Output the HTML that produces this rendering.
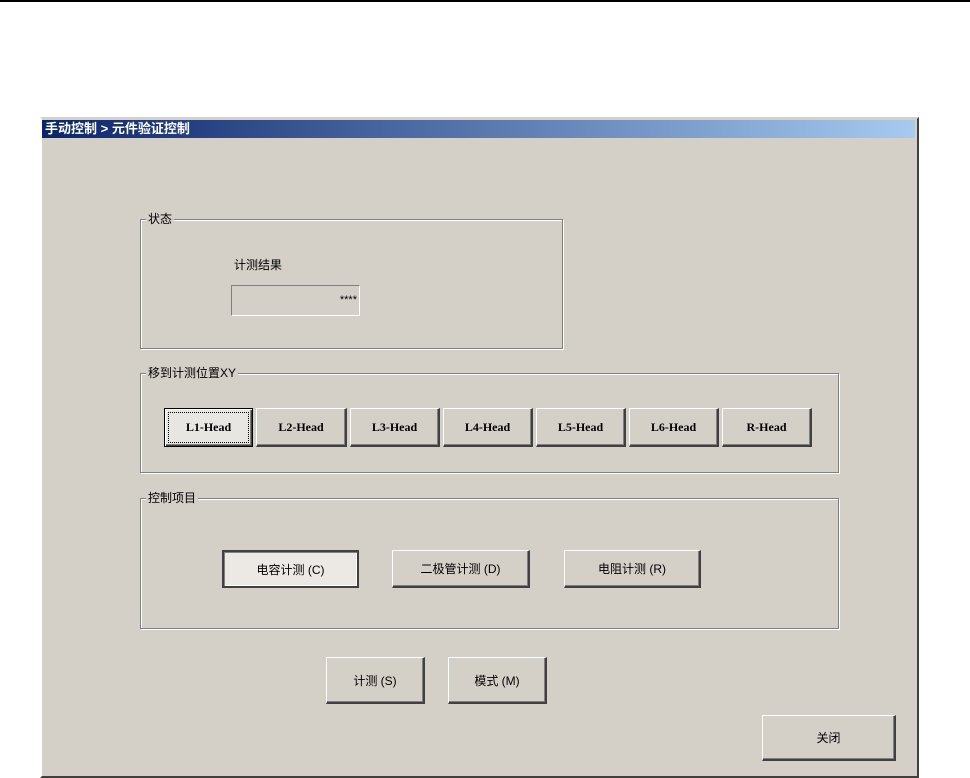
<!DOCTYPE html>
<html><head><meta charset="utf-8"><style>
*{margin:0;padding:0;box-sizing:border-box}
body{width:970px;height:778px;background:#fff;position:relative;overflow:hidden;font-family:"Liberation Sans","Noto Sans CJK SC","WenQuanYi Zen Hei",sans-serif;font-size:12px;color:#000}
.a{position:absolute}
.win{left:40px;top:117px;width:879px;height:661px;background:#d4d0c8;border-top:2px solid #d4d0c8;border-left:2px solid #fff;border-right:2px solid #404040;border-bottom:2px solid #404040}
.title{left:42px;top:120px;width:873px;height:18px;background:linear-gradient(90deg,#0a246a,#a6caf0);color:#fff;font-weight:bold;font-size:13px;line-height:18px;padding-left:3px}
.grp{border:1px solid #808080;box-shadow:1px 1px 0 #fff inset,1px 1px 0 #fff}
.lbl{background:#d4d0c8;padding:0 2px;line-height:14px}
.btn{background:#d4d0c8;border-top:1px solid #fff;border-left:1px solid #fff;border-right:2px solid #404040;border-bottom:2px solid #404040;box-shadow:inset -1px -1px 0 #808080;display:flex;align-items:center;justify-content:center;font-size:12px}
.mono{font-family:"Liberation Serif",serif;font-size:12px;font-weight:bold}
.def{border:1px solid #000;box-shadow:inset 1px 1px 0 #fff,inset -1px -1px 0 #404040,inset -2px -2px 0 #808080}
.foc{outline:1px dotted #000;outline-offset:-5px;background:#e8e6e2}
.pressed{background:#ece9e4;border-top:2px solid #404040;border-left:2px solid #404040;border-right:2px solid #404040;border-bottom:2px solid #404040;box-shadow:inset 1px 1px 0 #808080,inset -1px -1px 0 #fff}
.edit{border-top:1px solid #808080;border-left:1px solid #808080;border-right:1px solid #fff;border-bottom:1px solid #fff;text-align:right;padding-right:2px;line-height:28px;font-size:11px}
</style></head><body>
<div class="a" style="left:0;top:0;width:970px;height:2px;background:#000"></div>
<div class="a win"></div>
<div class="a title">手动控制 &gt; 元件验证控制</div>

<div class="a grp" style="left:140px;top:219px;width:423px;height:130px"></div>
<div class="a lbl" style="left:146px;top:212px">状态</div>
<div class="a" style="left:234px;top:256px">计测结果</div>
<div class="a edit" style="left:231px;top:285px;width:129px;height:31px">****</div>

<div class="a grp" style="left:140px;top:373px;width:699px;height:100px"></div>
<div class="a lbl" style="left:146px;top:366px">移到计测位置XY</div>
<div class="a btn mono def foc" style="left:164px;top:408px;width:89px;height:39px">L1-Head</div>
<div class="a btn mono" style="left:256px;top:408px;width:91px;height:39px">L2-Head</div>
<div class="a btn mono" style="left:350px;top:408px;width:90px;height:39px">L3-Head</div>
<div class="a btn mono" style="left:443px;top:408px;width:90px;height:39px">L4-Head</div>
<div class="a btn mono" style="left:536px;top:408px;width:90px;height:39px">L5-Head</div>
<div class="a btn mono" style="left:629px;top:408px;width:90px;height:39px">L6-Head</div>
<div class="a btn mono" style="left:722px;top:408px;width:90px;height:39px">R-Head</div>

<div class="a grp" style="left:140px;top:498px;width:699px;height:131px"></div>
<div class="a lbl" style="left:146px;top:491px">控制项目</div>
<div class="a btn pressed" style="left:222px;top:550px;width:137px;height:38px">电容计测 (C)</div>
<div class="a btn" style="left:392px;top:550px;width:138px;height:38px">二极管计测 (D)</div>
<div class="a btn" style="left:564px;top:550px;width:137px;height:38px">电阻计测 (R)</div>

<div class="a btn" style="left:326px;top:657px;width:99px;height:47px">计测 (S)</div>
<div class="a btn" style="left:448px;top:657px;width:99px;height:47px">模式 (M)</div>
<div class="a btn" style="left:762px;top:715px;width:134px;height:46px">关闭</div>
</body></html>
